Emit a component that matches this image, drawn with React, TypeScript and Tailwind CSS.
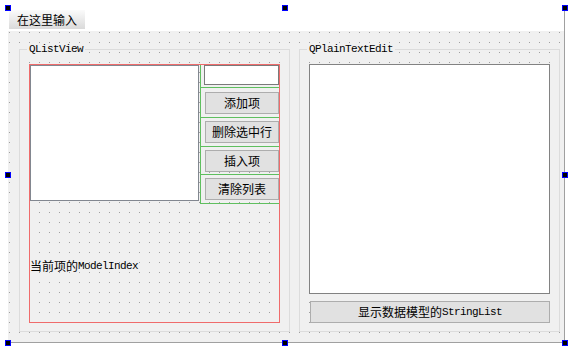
import React from "react";

const cjk = "font-['Noto_Sans_CJK_SC',sans-serif] text-[12px]";
const latin = "font-['Liberation_Mono',monospace] text-[11px] tracking-[-0.6px]";

// splits a label into Chinese and Latin runs, each with its own font
function Mixed({ text }: { text: string }) {
  const parts = text.match(/[\x00-\x7f]+|[^\x00-\x7f]+/g) ?? [];
  return (
    <>
      {parts.map((p, i) =>
        /^[\x00-\x7f]/.test(p) ? (
          <span key={i} className={latin}>
            {p}
          </span>
        ) : (
          <span key={i} className={cjk}>
            {p}
          </span>
        )
      )}
    </>
  );
}

function Button({ label, className = "" }: { label: string; className?: string }) {
  return (
    <div
      className={`h-[22px] flex items-center justify-center bg-[#e1e1e1] border border-[#adadad] text-black leading-[12px] ${className}`}
    >
      <Mixed text={label} />
    </div>
  );
}

function Handle({ x, y }: { x: number; y: number }) {
  return (
    <div
      className="absolute w-[6px] h-[6px] bg-black border border-[#0000ff]"
      style={{ left: x, top: y }}
    />
  );
}

const dots =
  "bg-[#f0f0f0] bg-[image:conic-gradient(from_270deg_at_1px_1px,#a0a0a0_90deg,transparent_0)] bg-[length:10px_10px] bg-[position:1px_1px]";

const groupClass = "border border-[#dcdcdc] px-[9px] pt-[8px] pb-[8px] min-w-0";
const legendClass = `ml-[-2px] px-[2px] h-[13px] leading-[13px] bg-[#f0f0f0] text-black ${latin}`;

export default function App() {
  const sideButtons = ["添加项", "删除选中行", "插入项", "清除列表"];
  const cellHeights = ["h-[30px]", "h-[29px]", "h-[28px]", "h-[29px]"];

  return (
    <div className="relative w-[576px] h-[352px] bg-white overflow-hidden">
      {/* form */}
      <div className="ml-[8px] mt-[8px] w-[557px] h-[335px] border-r border-b border-[#a0a0a0] flex flex-col">
        {/* menu bar */}
        <div className="h-[23px] bg-white flex items-start">
          <div className="ml-[1px] mt-[2px] w-[76px] h-[19px] flex items-center justify-center bg-gradient-to-b from-[#fbfbfb] to-[#dadada] text-black leading-[12px]">
            <span className={cjk}>在这里输入</span>
          </div>
        </div>

        {/* central widget */}
        <div className={`flex-1 flex items-start pl-[11px] pt-[12px] gap-[9px] ${dots}`}>
          {/* QListView group */}
          <fieldset className={`${groupClass} w-[271px]`}>
            <legend className={legendClass}>QListView</legend>
            <div className="w-[251px] h-[259px] border border-[#ef6b6b] flex flex-col">
              <div className="flex h-[139px]">
                <div className="w-[169px] h-[136px] bg-white border border-[#828790]" />
                <div className="ml-[1px] w-[79px] border-l border-[#5fbf5f] flex flex-col">
                  <div className="h-[23px] border-b border-[#5fbf5f] pl-[3px]">
                    <div className="w-[75px] h-[20px] bg-white border border-[#7a7a7a]" />
                  </div>
                  {sideButtons.map((b, i) => (
                    <div
                      key={b}
                      className={`${cellHeights[i]} border-b border-[#5fbf5f] pl-[4px] flex items-center`}
                    >
                      <Button label={b} className="w-[74px]" />
                    </div>
                  ))}
                </div>
              </div>
              <div className="flex-1 flex items-center pt-[6px] text-black leading-[14px]">
                <Mixed text="当前项的ModelIndex" />
              </div>
            </div>
          </fieldset>

          {/* QPlainTextEdit group */}
          <fieldset className={`${groupClass} w-[261px]`}>
            <legend className={legendClass}>QPlainTextEdit</legend>
            <div className="w-[241px] h-[230px] bg-white border border-[#828282]" />
            <Button label="显示数据模型的StringList" className="mt-[7px] ml-[1px] w-[240px]" />
          </fieldset>
        </div>
      </div>

      {/* selection handles */}
      <Handle x={5} y={5} />
      <Handle x={282} y={5} />
      <Handle x={562} y={5} />
      <Handle x={5} y={172} />
      <Handle x={562} y={172} />
      <Handle x={5} y={340} />
      <Handle x={282} y={340} />
      <Handle x={562} y={340} />
    </div>
  );
}
